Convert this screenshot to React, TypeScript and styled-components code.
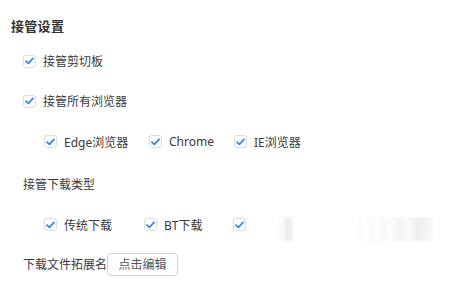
import styled, { createGlobalStyle } from "styled-components";

const GlobalStyle = createGlobalStyle`
  html, body {
    margin: 0;
    padding: 0;
    background: #ffffff;
  }
  body {
    font-family: "Noto Sans", "Noto Sans CJK SC", sans-serif;
    color: #333333;
  }
`;

const Panel = styled.div`
  display: flex;
  flex-direction: column;
  padding: 10px 0 0 11px;
`;

const Title = styled.div`
  height: 31px;
  display: flex;
  align-items: center;
  font-size: 13px;
  font-weight: 700;
  color: #333333;
  letter-spacing: 0.3px;
`;

const Row = styled.div<{ indent: number; h?: number }>`
  height: ${({ h }) => h ?? 40}px;
  display: flex;
  align-items: center;
  padding-left: ${({ indent }) => indent}px;
  font-size: 12px;
  color: #3a3a3a;
`;

const Item = styled.label<{ width?: number }>`
  display: flex;
  align-items: center;
  gap: 7px;
  width: ${({ width }) => (width ? `${width}px` : "auto")};
  flex-shrink: 0;
  cursor: pointer;
`;

const Box = styled.span`
  width: 11px;
  height: 11px;
  border: 1px solid #dcdcdc;
  border-radius: 3px;
  background: #ffffff;
  display: flex;
  align-items: center;
  justify-content: center;
  flex-shrink: 0;
`;

const Label = styled.span`
  white-space: nowrap;
`;

const EditButton = styled.button`
  height: 23px;
  width: 71px;
  padding: 0;
  border: 1px solid #d0d0d0;
  border-radius: 4px;
  background: #ffffff;
  font-family: inherit;
  font-size: 12px;
  color: #555555;
`;

const Smudge = styled.span`
  margin: 8px 0 0 31px;
  width: 164px;
  height: 24px;
  filter: blur(1px);
  opacity: 0.45;
  background: linear-gradient(
    to right,
    transparent 0px,
    #f0f0f0 4px,
    transparent 6px,
    #d8d8d8 8px,
    #e0e0e0 14px,
    transparent 17px,
    transparent 80px,
    #eeeeee 84px,
    transparent 86px,
    #f2f2f2 98px,
    transparent 101px,
    #ececec 106px,
    transparent 112px,
    #e6e6e6 122px,
    #f6f6f6 132px,
    #dcdcdc 140px,
    #e6e6e6 150px,
    transparent 158px
  );
`;

const Check = () => (
  <Box>
    <svg width="9" height="8" viewBox="0 0 9 8">
      <path
        d="M1 4.2 L3.4 6.4 L8 1.4"
        fill="none"
        stroke="#3d84f2"
        strokeWidth="1.8"
        strokeLinecap="round"
        strokeLinejoin="round"
      />
    </svg>
  </Box>
);

const CheckItem = ({ text, width }: { text?: string; width?: number }) => (
  <Item width={width}>
    <Check />
    {text && <Label>{text}</Label>}
  </Item>
);

export default function App() {
  return (
    <>
      <GlobalStyle />
      <Panel>
        <Title>接管设置</Title>
        <Row indent={12}>
          <CheckItem text="接管剪切板" />
        </Row>
        <Row indent={12}>
          <CheckItem text="接管所有浏览器" />
        </Row>
        <Row indent={33} h={41}>
          <CheckItem text="Edge浏览器" width={105} />
          <CheckItem text="Chrome" width={85} />
          <CheckItem text="IE浏览器" />
        </Row>
        <Row indent={12} h={43}>
          <Label>接管下载类型</Label>
        </Row>
        <Row indent={33} h={39}>
          <CheckItem text="传统下载" width={100} />
          <CheckItem text="BT下载" width={89} />
          <CheckItem />
          <Smudge />
        </Row>
        <Row indent={12}>
          <Label>下载文件拓展名</Label>
          <EditButton>点击编辑</EditButton>
        </Row>
      </Panel>
    </>
  );
}
